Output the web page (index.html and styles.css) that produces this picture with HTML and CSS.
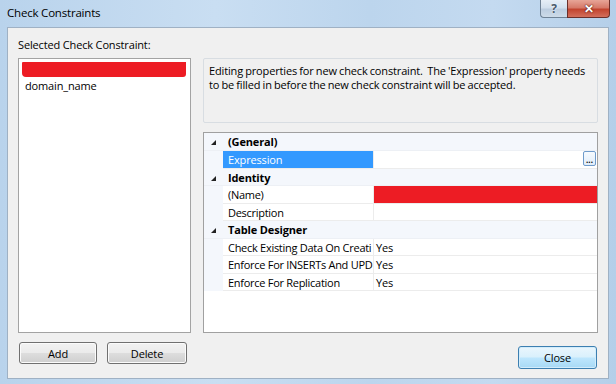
FILE: index.html
```html
<!DOCTYPE html>
<html>
<head>
<meta charset="utf-8">
<link rel="stylesheet" href="styles.css">
</head>
<body>
<div class="frame">
  <div class="titlebar">
    <span class="title">Check Constraints</span>
    <div class="caption">
      <span class="cap-help">?</span>
      <span class="cap-close">✕</span>
    </div>
  </div>
  <div class="client">
    <div class="label">Selected Check Constraint:</div>
    <div class="listbox">
      <div class="item"><span class="redact redact-item"></span></div>
      <div class="item">domain_name</div>
    </div>
    <div class="rightcol">
      <div class="desc">Editing properties for new check constraint.&nbsp; The 'Expression' property needs to be filled in before the new check constraint will be accepted.</div>
      <div class="pgrid">
        <div class="row first cat"><span class="gutter"><span class="tri"></span></span><span class="cname">(General)</span></div>
        <div class="row"><span class="gutter"></span><span class="name sel">Expression</span><span class="val"><span class="dots">...</span></span></div>
        <div class="row cat"><span class="gutter"><span class="tri"></span></span><span class="cname">Identity</span></div>
        <div class="row"><span class="gutter"></span><span class="name">(Name)</span><span class="val redval"></span></div>
        <div class="row"><span class="gutter"></span><span class="name">Description</span><span class="val"></span></div>
        <div class="row cat"><span class="gutter"><span class="tri"></span></span><span class="cname">Table Designer</span></div>
        <div class="row"><span class="gutter"></span><span class="name">Check Existing Data On Creati</span><span class="val">Yes</span></div>
        <div class="row"><span class="gutter"></span><span class="name">Enforce For INSERTs And UPD</span><span class="val">Yes</span></div>
        <div class="row"><span class="gutter"></span><span class="name">Enforce For Replication</span><span class="val">Yes</span></div>
      </div>
    </div>
    <div class="leftbtns">
      <button class="btn btn-add">Add</button>
      <button class="btn btn-del">Delete</button>
    </div>
    <div class="closerow">
      <button class="btn btn-close">Close</button>
    </div>
  </div>
</div>
</body>
</html>
```
FILE: styles.css
```css
* { box-sizing: border-box; }
html, body { margin: 0; padding: 0; }
body {
  width: 616px;
  height: 384px;
  overflow: hidden;
  font-family: "Open Sans", "Noto Sans", sans-serif;
  font-size: 11px;
  letter-spacing: -0.15px;
  color: #000;
}
.frame {
  width: 616px;
  height: 384px;
  display: flex;
  flex-direction: column;
  background: linear-gradient(90deg, #b9d3ec 0%, #c9def2 35%, #bcd5ed 60%, #c4daf0 80%, #b5cfe9 100%);
}
.titlebar {
  height: 27px;
  display: flex;
  justify-content: space-between;
  align-items: flex-start;
  flex: none;
}
.title {
  padding: 5px 0 0 7px;
  font-size: 11.5px;
  letter-spacing: -0.2px;
  line-height: 16px;
  color: #000;
}
.caption {
  display: flex;
  margin-right: 6px;
  height: 18px;
}
.cap-help {
  width: 27px;
  height: 18px;
  border: 1px solid #6f8296;
  border-top: none;
  border-right: none;
  border-radius: 0 0 0 4px;
  background: linear-gradient(#e6eef7 0%, #d3e0ee 45%, #bccde0 55%, #cddbe9 100%);
  color: #4a5a6c;
  font-weight: bold;
  font-size: 12px;
  line-height: 17px;
  text-align: center;
  text-shadow: 0 0 2px #fff;
}
.cap-close {
  width: 43px;
  height: 18px;
  border: 1px solid #6b2f2a;
  border-top: none;
  border-radius: 0 0 4px 0;
  background: linear-gradient(#e7a597 0%, #d67a69 45%, #c2442f 55%, #d36f5c 100%);
  color: #fff;
  font-weight: bold;
  font-size: 12px;
  line-height: 17px;
  text-align: center;
  text-shadow: 0 0 2px #5a1a10, 0 0 1px #5a1a10;
}
.client {
  flex: 1;
  margin: 0 7px 5px 7px;
  border: 1px solid #9fb1c4;
  background: #f0f0f0;
  display: grid;
  grid-template-columns: 173px 395px;
  grid-template-rows: 20px 275px auto;
  column-gap: 12px;
  padding: 10px 10px 0 10px;
}
.label {
  grid-column: 1;
  grid-row: 1;
  line-height: 14px;
  height: 14px;
}
.listbox {
  grid-column: 1;
  grid-row: 2;
  border: 1px solid #a3a3a3;
  background: #fff;
  padding: 2px 3px;
}
.item {
  height: 16px;
  line-height: 16px;
  padding-left: 3px;
}
.redact {
  display: block;
  background: #ed1c24;
}
.redact-item {
  height: 15px;
  margin: 1px 1px 0 -3px;
  border-radius: 1px 0 3px 4px;
}
.rightcol {
  grid-column: 2;
  grid-row: 2;
  display: flex;
  flex-direction: column;
}
.desc {
  height: 65px;
  flex: none;
  border: 1px solid #d8dde2;
  border-radius: 2px;
  background: #f0f0f0;
  padding: 5px 5px 4px 5px;
  line-height: 13.5px;
  word-spacing: -0.5px;
  margin-bottom: 9px;
}
.pgrid {
  flex: 1;
  border: 1px solid #a0a0a0;
  background: #fff;
}
.row {
  display: flex;
  height: 17.5px;
  line-height: 17px;
}
.row.first { height: 18px; line-height: 18px; }
.gutter {
  width: 19px;
  flex: none;
  background: #f4f7fc;
  position: relative;
}
.tri {
  position: absolute;
  left: 7px;
  top: 7px;
  width: 0;
  height: 0;
  border-left: 5px solid transparent;
  border-bottom: 5px solid #222;
}
.cat {
  background: #f4f7fc;
  border-bottom: 1px solid #edf0f5;
}
.cname {
  font-weight: bold;
  padding-left: 5px;
}
.name {
  width: 150px;
  flex: none;
  padding-left: 5px;
  white-space: nowrap;
  overflow: hidden;
  letter-spacing: -0.28px;
  border-bottom: 1px solid #ececec;
}
.name.sel {
  background: #3399ff;
  color: #fff;
  letter-spacing: -0.15px;
}
.val {
  flex: 1;
  display: flex;
  border-left: 1px solid #ececec;
  border-bottom: 1px solid #ececec;
  padding-left: 2px;
}
.redval {
  background: #ed1c24;
  border-left-color: #ececec;
}
.dots {
  margin: 0 1px 0 auto;
  width: 13px;
  height: 15px;
  border: 1px solid #6f9bcb;
  border-radius: 2px;
  background: linear-gradient(#f6fafe, #e1edf9);
  font-size: 8px;
  line-height: 16px;
  text-align: center;
  letter-spacing: 0;
  color: #000;
  font-weight: bold;
}
.leftbtns {
  grid-column: 1;
  grid-row: 3;
  display: flex;
  gap: 10px;
  padding-left: 1px;
  margin-top: 9px;
  align-items: flex-start;
}
.closerow {
  grid-column: 2;
  grid-row: 3;
  display: flex;
  justify-content: flex-end;
  margin-top: 13px;
  padding-right: 1px;
  align-items: flex-start;
}
.btn {
  font-family: "Open Sans", "Noto Sans", sans-serif;
  font-size: 11px;
  letter-spacing: -0.15px;
  color: #000;
  height: 22px;
  padding: 0;
  border: 1px solid #707070;
  border-radius: 3px;
  background: linear-gradient(#f2f2f2 0%, #ebebeb 48%, #dddddd 52%, #cfcfcf 100%);
  box-shadow: inset 0 0 0 1px #fbfbfb;
}
.btn-add { width: 78px; }
.btn-del { width: 80px; }
.btn-close {
  width: 79px;
  height: 23px;
  border-color: #3c7fb1;
  background: linear-gradient(#eaf6fd 0%, #d9f0fc 48%, #bee6fd 52%, #a7d9f5 100%);
  box-shadow: inset 0 0 0 1px #d2ecfb;
}
```
